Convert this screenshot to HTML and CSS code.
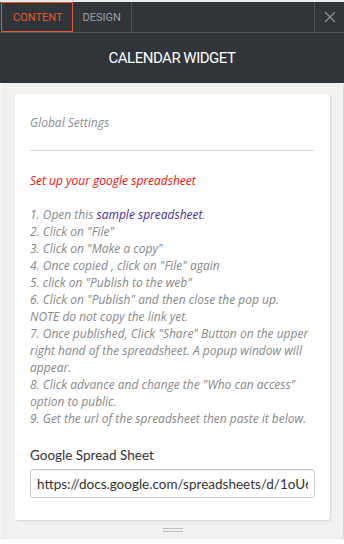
FILE: index.html
```html
<!DOCTYPE html>
<html lang="en">
<head>
    <meta charset="UTF-8">
    <title>Calendar Widget</title>
    <link rel="stylesheet" href="styles.css">
</head>
<body>
    <div class="topline"></div>
    <div class="tabs">
        <a class="tab active" href="javascript:;">CONTENT</a>
        <a class="tab" href="javascript:;">DESIGN</a>
        <div class="spacer"></div>
        <a class="close" href="javascript:;">
            <svg width="12" height="12" viewBox="0 0 12 12"><path d="M1 1L11 11M11 1L1 11" stroke="#8a9399" stroke-width="1.2" fill="none"/></svg>
        </a>
    </div>
    <div class="header">CALENDAR WIDGET</div>
    <div class="panel">
        <div class="card">
            <p class="section">Global Settings</p>
            <hr class="rule">
            <p class="warn">Set up your google spreadsheet</p>
            <p class="steps">
                1. Open this <a href="javascript:;">sample spreadsheet</a>.<br>
                2. Click on "File"<br>
                3. Click on "Make a copy"<br>
                4. Once copied , click on "File" again<br>
                5. click on "Publish to the web"<br>
                6. Click on "Publish" and then close the pop up.<br>
                NOTE do not copy the link yet.<br>
                7. Once published, Click "Share" Button on the upper right hand of the spreadsheet. A popup window will appear.<br>
                8. Click advance and change the "Who can access" option to public.<br>
                9. Get the url of the spreadsheet then paste it below.
            </p>
            <label class="label">Google Spread Sheet</label>
            <input class="field" type="text" value="https://docs.google.com/spreadsheets/d/1oU6qCIxYz2Hd9">
        </div>
        <div class="handle"><span></span><span></span></div>
    </div>
</body>
</html>
```

FILE: styles.css
```css
* { padding: 0; margin: 0; box-sizing: border-box; }
body { background: #fff; font-family: "Open Sans", sans-serif; }
a { text-decoration: none; }

.topline { height: 2px; background: #e9e9e9; }

.tabs { display: flex; height: 31px; background: #2f3539; border-bottom: 1px solid #4b5358; }
.tab { display: flex; align-items: center; padding: 0 10px; font-family: Roboto, sans-serif; font-size: 11px; color: #9aa3a8; border-right: 1px solid #4b5358; }
.tab.active { margin-left: 1px; padding: 0 9px 0 11px; color: #e9552f; border: 1px solid #e9552f; height: 30px; }
.spacer { flex: 1; }
.close { width: 30px; display: flex; align-items: center; justify-content: center; border-left: 1px solid #4b5358; }

.header { height: 50px; background: #2f3539; color: #fff; font-family: Roboto, sans-serif; font-size: 15px; letter-spacing: -0.5px; display: flex; align-items: center; justify-content: center; padding-bottom: 1px; }

.panel { margin: 0 1px 0 1px; background: #f1f1f1; padding: 11px 13px 0 14px; border-radius: 0 0 4px 4px; box-shadow: 1px 1px 3px rgba(0,0,0,.25); }
.card { background: #fff; border-radius: 3px; box-shadow: 1px 1px 2px rgba(0,0,0,.12); padding: 20px 15px 22px; }

.section { font-style: italic; font-size: 12px; color: #878d92; line-height: 17px; }
.rule { border: 0; border-top: 1px solid #d3d8db; margin: 19px 1px 0 0; }
.warn { font-style: italic; font-size: 12px; color: #f50d0d; margin-top: 21px; line-height: 17px; }
.steps { font-style: italic; font-size: 12px; color: #888; margin-top: 17px; line-height: 17px; }
.steps a { color: #4d2b91; }

.label { display: block; margin-top: 19px; font-family: Lato, sans-serif; font-size: 13.5px; color: #333; line-height: 18px; }
.field { display: block; width: 100%; height: 29px; margin-top: 5px; padding: 0 6px; border: 1px solid #ccc; border-radius: 3px; box-shadow: inset 0 1px 1px rgba(0,0,0,.08); font-family: Lato, sans-serif; font-size: 13.5px; color: #333; }

.handle { height: 19px; display: flex; flex-direction: column; align-items: center; justify-content: center; gap: 2px; }
.handle span { width: 20px; height: 1px; background: #bdbdbd; }
```
